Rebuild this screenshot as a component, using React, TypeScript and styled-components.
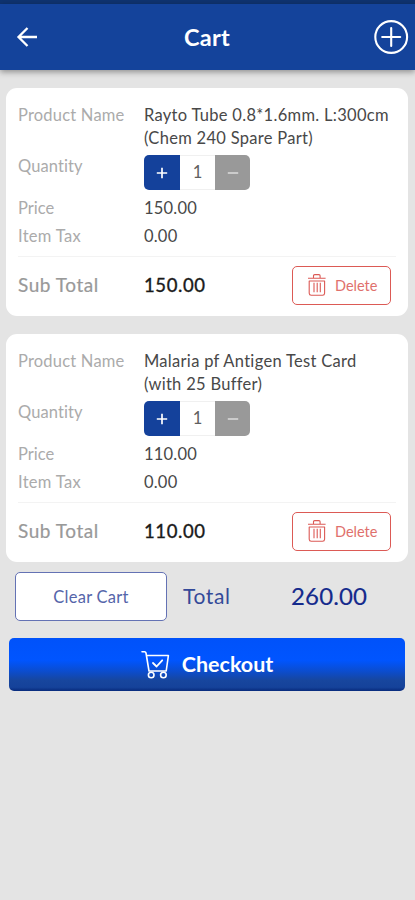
import React from "react";
import styled, { createGlobalStyle } from "styled-components";

const GlobalStyle = createGlobalStyle`
  *, *::before, *::after { box-sizing: border-box; }
  html, body { margin: 0; background: #e4e4e4; }
  body { font-family: Lato, "Open Sans", sans-serif; color: #444; }
  button { font-family: inherit; padding: 0; margin: 0; cursor: pointer; }
  svg { display: block; flex: none; }
`;

const Screen = styled.div`
  width: 415px;
  height: 900px;
  overflow: hidden;
  background: #e4e4e4;
`;

const StatusStrip = styled.div`
  height: 4px;
  background: #0f3370;
`;

const Header = styled.header`
  display: grid;
  grid-template-columns: 60px 1fr 60px;
  align-items: center;
  height: 66px;
  padding: 0 6px 0 16px;
  background: #14439b;
  box-shadow: 0 2px 6px rgba(0, 0, 0, 0.38);
  color: #fff;
`;

const Title = styled.h1`
  margin: 0 0 0 -11px;
  text-align: center;
  font-size: 23.5px;
  line-height: 28px;
  font-weight: 700;
  letter-spacing: 0.3px;
`;

const IconButton = styled.button<{ $end?: boolean }>`
  display: flex;
  justify-content: ${(p) => (p.$end ? "flex-end" : "flex-start")};
  border: 0;
  background: none;
  color: inherit;
`;

const CardList = styled.main`
  display: flex;
  flex-direction: column;
  gap: 18px;
  padding: 18px 7px 0 6px;
`;

const Card = styled.section`
  height: 228px;
  padding: 16px 12px 0;
  border-radius: 11px;
  background: #fff;
`;

const Row = styled.div<{ $height: number }>`
  display: grid;
  grid-template-columns: 126px 1fr;
  height: ${(p) => p.$height}px;
`;

const Label = styled.span<{ $line?: number; $spacing?: number }>`
  font-size: 16.5px;
  line-height: ${(p) => p.$line ?? 23}px;
  letter-spacing: ${(p) => p.$spacing ?? 0.2}px;
  color: #ababab;
`;

const Value = styled.span<{ $line?: number; $spacing?: number }>`
  font-size: 16.5px;
  line-height: ${(p) => p.$line ?? 23}px;
  letter-spacing: ${(p) => p.$spacing ?? 0.2}px;
  color: #484848;
  white-space: pre-line;
`;

const Stepper = styled.div`
  display: grid;
  grid-template-columns: 36px 35px 35px;
  width: 106px;
  height: 35px;
  border-radius: 5px;
  overflow: hidden;
`;

const StepButton = styled.button<{ $muted?: boolean }>`
  display: grid;
  place-items: center;
  border: 0;
  background: ${(p) => (p.$muted ? "#999" : "#14419b")};
`;

const Count = styled.span`
  border: solid #f0f0f0;
  border-width: 1px 0;
  text-align: center;
  font-size: 16.5px;
  line-height: 33px;
  color: #606060;
`;

const CardFooter = styled.div`
  display: grid;
  grid-template-columns: 126px 148px 99px;
  align-items: center;
  height: 57px;
  border-top: 1px solid #f3f3f3;
  margin-top: 4px;
`;

const SubLabel = styled.span`
  margin-top: -2px;
  font-size: 19px;
  letter-spacing: 0.55px;
  color: #999;
  -webkit-text-stroke: 0.2px #999;
`;

const SubValue = styled.span`
  margin-top: -1px;
  font-size: 18.5px;
  letter-spacing: 0.6px;
  color: #1a1a1a;
  -webkit-text-stroke: 0.35px #1a1a1a;
`;

const DeleteButton = styled.button`
  display: flex;
  align-items: center;
  gap: 8px;
  height: 39px;
  padding: 0 0 0 14px;
  border: 1px solid #dc5a55;
  border-radius: 5px;
  background: #fff;
  color: #e0706c;
  font-size: 14.5px;
  letter-spacing: 0;
`;

const Summary = styled.div`
  display: grid;
  grid-template-columns: 152px 1fr 77px;
  align-items: center;
  height: 49px;
  margin: 10px 47px 0 15px;
  color: #344a99;
`;

const ClearButton = styled.button`
  height: 49px;
  border: 1px solid #6472b4;
  border-radius: 5px;
  background: #fff;
  color: #5565aa;
  font-size: 16.5px;
  letter-spacing: 0.25px;
`;

const TotalLabel = styled.span`
  margin-top: -3px;
  padding-left: 16px;
  font-size: 21px;
  letter-spacing: 0.6px;
`;

const TotalValue = styled.span`
  margin-top: -3px;
  font-size: 24px;
  letter-spacing: 0.15px;
  color: #142a8c;
  -webkit-text-stroke: 0.15px #142a8c;
  white-space: nowrap;
`;

const CheckoutButton = styled.button`
  display: flex;
  align-items: center;
  justify-content: center;
  gap: 12px;
  width: 396px;
  height: 53px;
  margin: 17px 0 0 9px;
  border: 0;
  border-radius: 5px;
  background: linear-gradient(#0052fa 0%, #0055ff 42%, #0b4dd0 62%, #17469e 80%, #15429a 93%, #082a7c 100%);
  color: #fff;
  font-size: 21.5px;
  font-weight: 700;
`;

const CheckoutText = styled.span`
  margin-top: -1px;
`;

const BackIcon = () => (
  <svg width="23" height="22" viewBox="0 0 23 22" fill="none" stroke="#fff" strokeWidth="2.3">
    <path d="M21 11H3M11.5 2 2.5 11l9 9" />
  </svg>
);

const AddIcon = () => (
  <svg width="36" height="36" viewBox="0 0 36 36" fill="none" stroke="#fff" strokeWidth="2.1">
    <circle cx="18.2" cy="18" r="15.9" />
    <path d="M18.2 9v18M9.2 18h18" strokeLinecap="round" />
  </svg>
);

const StepIcon = ({ plus }: { plus?: boolean }) => (
  <svg width="12" height="12" viewBox="0 0 12 12" stroke={plus ? "#fff" : "#dcdcdc"} strokeWidth="1.7">
    <path d={plus ? "M.8 6h10.4M6 .8v10.4" : "M.8 6h10.4"} />
  </svg>
);

const TrashIcon = () => (
  <svg width="20" height="24" viewBox="0 0 20 24" fill="none" stroke="#dc5a55" strokeWidth="1.1" strokeLinejoin="round">
    <path d="M1 5.2h17.6M6.5 4.9V2.8q0-1.2 1.2-1.2h4.2q1.2 0 1.2 1.2v2.1" />
    <path d="M2.2 8v12.3q.1 2 2 2h11.4q1.9 0 2-2V8zM7 9.8v9.4M10.2 9.8v9.4M13.3 9.8v9.4" />
  </svg>
);

const CartIcon = () => (
  <svg width="29" height="29" viewBox="0 0 29 29" fill="none" stroke="#fff" strokeWidth="1.6" strokeLinecap="round" strokeLinejoin="round">
    <path d="M1 1.8h2.5q1.2 0 1.5 1.2l3 18h17.2M5.4 5.5h22l-2.2 15.5" />
    <path d="m12 13 3.6 3.5 5.6-6.2" strokeWidth="1.8" />
    <circle cx="10.2" cy="25" r="2.8" />
    <circle cx="22.4" cy="25" r="2.8" />
  </svg>
);

type Item = { name: string; quantity: number; price: string; tax: string; spacing: number };

const items: Item[] = [
  { name: "Rayto Tube 0.8*1.6mm. L:300cm\n(Chem 240 Spare Part)", quantity: 1, price: "150.00", tax: "0.00", spacing: 0.3 },
  { name: "Malaria pf Antigen Test Card\n(with 25 Buffer)", quantity: 1, price: "110.00", tax: "0.00", spacing: 0.3 },
];

const CartCard = ({ item }: { item: Item }) => (
  <Card>
    <Row $height={51}>
      <Label>Product Name</Label>
      <Value $spacing={item.spacing}>{item.name}</Value>
    </Row>
    <Row $height={39}>
      <Label $spacing={0.1}>Quantity</Label>
      <Stepper>
        <StepButton aria-label="Increase"><StepIcon plus /></StepButton>
        <Count>{item.quantity}</Count>
        <StepButton $muted aria-label="Decrease"><StepIcon /></StepButton>
      </Stepper>
    </Row>
    <Row $height={29}>
      <Label $line={28} $spacing={0}>Price</Label>
      <Value $line={28}>{item.price}</Value>
    </Row>
    <Row $height={29}>
      <Label $line={26} $spacing={0.3}>Item Tax</Label>
      <Value $line={26}>{item.tax}</Value>
    </Row>
    <CardFooter>
      <SubLabel>Sub Total</SubLabel>
      <SubValue>{item.price}</SubValue>
      <DeleteButton><TrashIcon />Delete</DeleteButton>
    </CardFooter>
  </Card>
);

export default function App() {
  return (
    <Screen>
      <GlobalStyle />
      <StatusStrip />
      <Header>
        <IconButton aria-label="Back"><BackIcon /></IconButton>
        <Title>Cart</Title>
        <IconButton $end aria-label="Add"><AddIcon /></IconButton>
      </Header>
      <CardList>
        {items.map((item) => <CartCard key={item.name} item={item} />)}
      </CardList>
      <Summary>
        <ClearButton>Clear Cart</ClearButton>
        <TotalLabel>Total</TotalLabel>
        <TotalValue>260.00</TotalValue>
      </Summary>
      <CheckoutButton><CartIcon /><CheckoutText>Checkout</CheckoutText></CheckoutButton>
    </Screen>
  );
}
